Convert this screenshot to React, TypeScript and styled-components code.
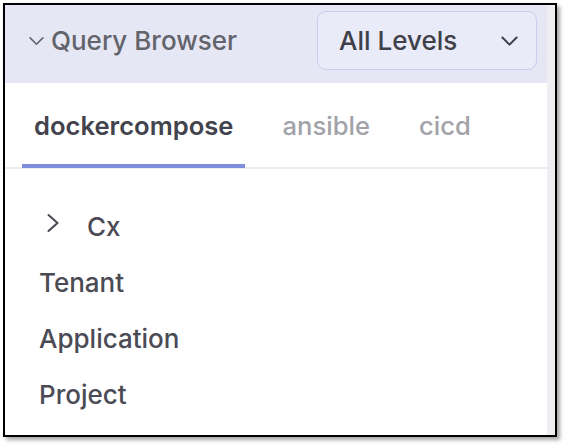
import React from "react";
import styled, { createGlobalStyle } from "styled-components";

const Global = createGlobalStyle`
  html, body { margin: 0; padding: 0; background: #ffffff; }
  body { font-family: Inter, "Noto Sans", sans-serif; width: 566px; height: 446px; overflow: hidden; }
`;

const Page = styled.div`
  padding: 3px 0 0 3px;
`;

const Frame = styled.div`
  width: 550px;
  height: 430px;
  border: 2px solid #000;
  box-shadow: 3px 3px 4px rgba(0, 0, 0, 0.35);
  display: flex;
  background: #fff;
  overflow: hidden;
`;

const Main = styled.div`
  flex: 1;
  display: flex;
  flex-direction: column;
`;

const ScrollTrack = styled.div`
  width: 8px;
  background: #efeff3;
`;

const Header = styled.div`
  height: 78px;
  background: #e6e7f4;
  display: flex;
  align-items: flex-start;
  justify-content: space-between;
  padding: 6px 10px 0 23px;
  box-sizing: border-box;
`;

const Title = styled.div`
  display: flex;
  align-items: center;
  gap: 6px;
  height: 59px;
  font-size: 26px;
  font-weight: 500;
  color: #62636b;
`;

const Select = styled.div`
  width: 220px;
  height: 59px;
  box-sizing: border-box;
  border: 1.5px solid #c9cdee;
  border-radius: 9px;
  background: #e9ebf8;
  display: flex;
  align-items: center;
  justify-content: space-between;
  padding: 0 17px 0 21px;
  font-size: 26px;
  font-weight: 500;
  color: #3f4049;
`;

const Tabs = styled.div`
  display: flex;
  gap: 25px;
  padding-left: 17px;
  border-bottom: 2px solid #ebebf3;
`;

const Tab = styled.div<{ $active?: boolean }>`
  padding: 4px 12px 0;
  height: 85px;
  box-sizing: border-box;
  display: flex;
  align-items: center;
  font-size: 25.6px;
  font-weight: ${(p) => (p.$active ? 600 : 500)};
  color: ${(p) => (p.$active ? "#42434c" : "#a2a2a9")};
  border-bottom: 4px solid ${(p) => (p.$active ? "#7e8edb" : "transparent")};
  margin-bottom: -1px;
`;

const Tree = styled.div`
  padding: 29px 0 0 34px;
  display: flex;
  flex-direction: column;
`;

const Row = styled.div<{ $indent?: boolean }>`
  height: 56px;
  display: flex;
  align-items: center;
  gap: 27px;
  padding-left: ${(p) => (p.$indent ? "7px" : "0")};
  font-size: 26px;
  font-weight: 500;
  color: #4a4b55;
`;

const Caret = styled.svg`
  margin-bottom: 6px;
  flex: none;
`;

const ChevronDown = ({ w, color, sw }: { w: number; color: string; sw: number }) => (
  <svg width={w} height={w} viewBox="0 0 16 16" fill="none">
    <path d="M2 5.5l6 6 6-6" stroke={color} strokeWidth={sw} strokeLinecap="round" strokeLinejoin="round" />
  </svg>
);

const ChevronRight = () => (
  <Caret width="14" height="20" viewBox="0 0 14 20" fill="none">
    <path d="M2.5 2l9 8-9 8" stroke="#4a4b55" strokeWidth="2.1" strokeLinecap="round" strokeLinejoin="round" />
  </Caret>
);

export default function App() {
  return (
    <>
      <Global />
      <Page>
        <Frame>
          <Main>
            <Header>
              <Title>
                <ChevronDown w={17} color="#62636b" sw={1.5} />
                Query Browser
              </Title>
              <Select>
                All Levels
                <ChevronDown w={19} color="#3f4049" sw={1.7} />
              </Select>
            </Header>
            <Tabs>
              <Tab $active>dockercompose</Tab>
              <Tab>ansible</Tab>
              <Tab>cicd</Tab>
            </Tabs>
            <Tree>
              <Row $indent>
                <ChevronRight />
                Cx
              </Row>
              <Row>Tenant</Row>
              <Row>Application</Row>
              <Row>Project</Row>
            </Tree>
          </Main>
          <ScrollTrack />
        </Frame>
      </Page>
    </>
  );
}
